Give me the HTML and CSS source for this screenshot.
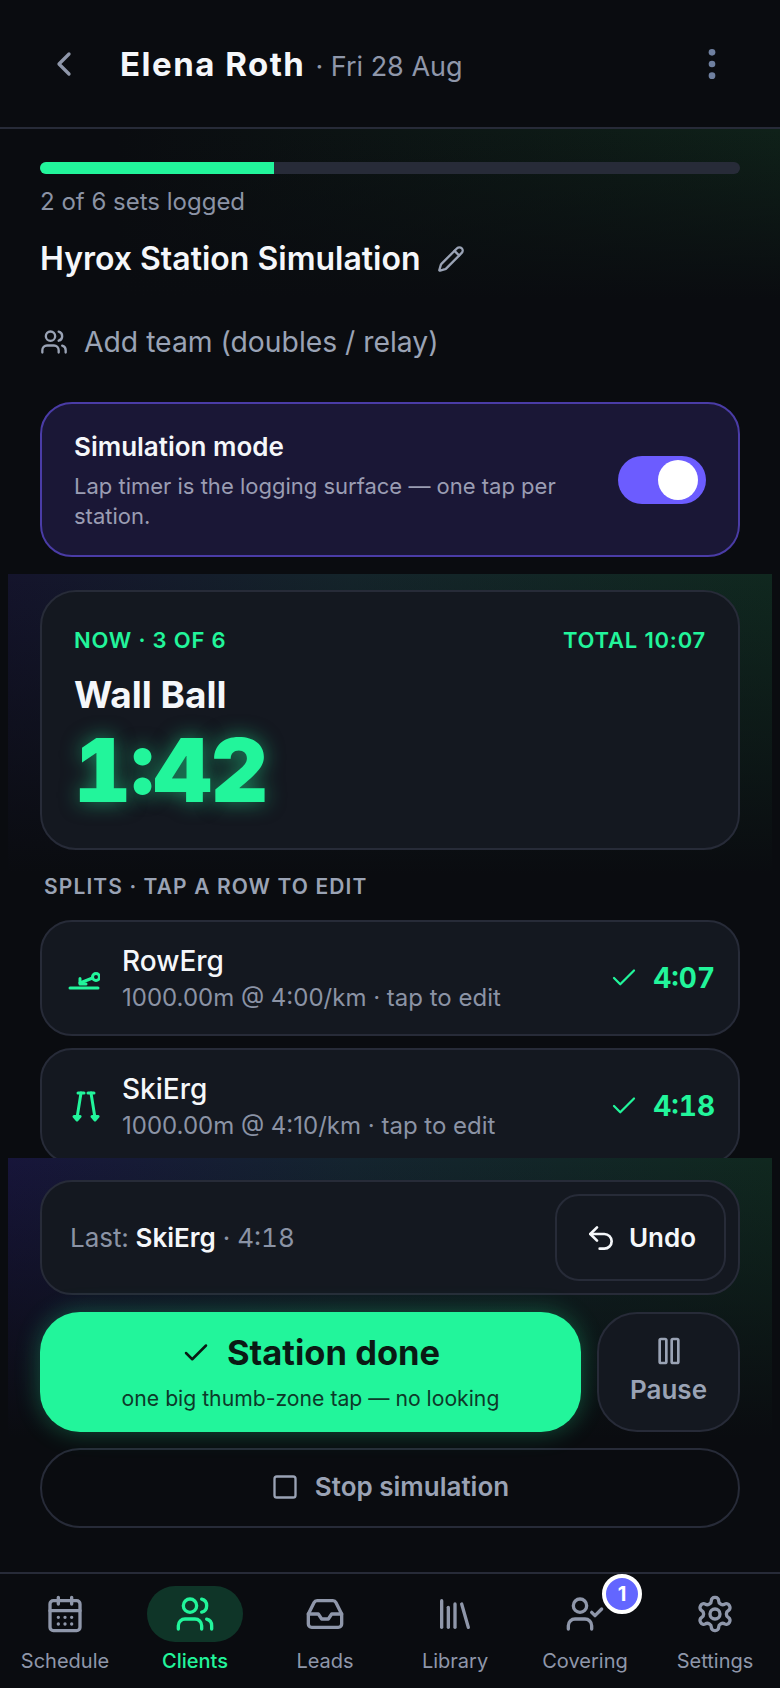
FILE: index.html
```html
<!DOCTYPE html>
<html lang="en">
<head>
    <meta charset="UTF-8">
    <meta name="viewport" content="width=device-width, initial-scale=1.0">
    <title>Elena Roth - Session</title>
    <link rel="stylesheet" href="styles.css">
</head>
<body>
    <header class="topbar">
        <svg class="back-icon" viewBox="0 0 24 24"><path d="m15 18-6-6 6-6"/></svg>
        <h1 class="client-name">Elena Roth</h1>
        <span class="client-date">· Fri 28 Aug</span>
        <svg class="more-icon" viewBox="0 0 24 24"><circle cx="12" cy="5" r="2"/><circle cx="12" cy="12" r="2"/><circle cx="12" cy="19" r="2"/></svg>
    </header>

    <div class="scroller">
        <section class="intro">
            <div class="progress"><div class="progress-fill"></div></div>
            <p class="progress-label">2 of 6 sets logged</p>
            <div class="session-title">
                <h2>Hyrox Station Simulation</h2>
                <svg class="icon pencil-icon" viewBox="0 0 24 24"><path d="M21.2 6.8a2.8 2.8 0 0 0-4-4L3.8 16.2a2 2 0 0 0-.5.8l-1.3 4.4a.5.5 0 0 0 .6.6l4.4-1.3a2 2 0 0 0 .8-.5z"/><path d="m15 5 4 4"/></svg>
            </div>
            <div class="add-team">
                <svg class="icon team-icon" viewBox="0 0 24 24"><path d="M16 21v-2a4 4 0 0 0-4-4H6a4 4 0 0 0-4 4v2"/><circle cx="9" cy="7" r="4"/><path d="M22 21v-2a4 4 0 0 0-3-3.87"/><path d="M16 3.13a4 4 0 0 1 0 7.75"/></svg>
                <span>Add team (doubles / relay)</span>
            </div>
            <div class="sim-card">
                <div class="sim-text">
                    <h3>Simulation mode</h3>
                    <p>Lap timer is the logging surface — one tap per station.</p>
                </div>
                <div class="toggle"><span class="toggle-knob"></span></div>
            </div>
        </section>

        <section class="timer-panel">
            <div class="timer-card">
                <div class="timer-head">
                    <span>NOW · 3 OF 6</span>
                    <span>TOTAL 10:07</span>
                </div>
                <div class="station-name">Wall Ball</div>
                <div class="timer-value">1:42</div>
            </div>
            <div class="splits-label">SPLITS · TAP A ROW TO EDIT</div>
            <div class="split-row">
                <svg class="split-icon" viewBox="0 0 32 32"><path d="M2 26h28"/><circle cx="28" cy="15" r="3.500"/><path d="M24.500 16 12 21"/><path d="M12 16.500V22h6"/></svg>
                <div class="split-info">
                    <div class="split-name">RowErg</div>
                    <div class="split-meta">1000.00m @ 4:00/km · tap to edit</div>
                </div>
                <svg class="icon split-check" viewBox="0 0 24 24"><path d="M20 6 9 17l-5-5"/></svg>
                <div class="split-time">4:07</div>
            </div>
            <div class="split-row">
                <svg class="split-icon" viewBox="0 0 32 32"><path d="M10 3h6M20 3h6"/><path d="M13 3 9 28M23 3l4 25"/><path d="M6 26.500 9 30l3-3.500zM24 26.500l3 3.500 3-3.500z"/></svg>
                <div class="split-info">
                    <div class="split-name">SkiErg</div>
                    <div class="split-meta">1000.00m @ 4:10/km · tap to edit</div>
                </div>
                <svg class="icon split-check" viewBox="0 0 24 24"><path d="M20 6 9 17l-5-5"/></svg>
                <div class="split-time">4:18</div>
            </div>
        </section>
    </div>

    <section class="dock">
        <div class="last-card">
            <div class="last-text">Last: <strong>SkiErg</strong> · 4:18</div>
            <button class="undo-btn">
                <svg class="icon" viewBox="0 0 24 24"><path d="M9 14 4 9l5-5"/><path d="M4 9h10.500a5.500 5.500 0 0 1 0 11H11"/></svg>
                Undo
            </button>
        </div>
        <div class="action-row">
            <button class="done-btn">
                <span class="done-title">
                    <svg class="icon" viewBox="0 0 24 24"><path d="M20 6 9 17l-5-5"/></svg>
                    Station done
                </span>
                <span class="done-sub">one big thumb-zone tap — no looking</span>
            </button>
            <button class="pause-btn">
                <svg class="icon" viewBox="0 0 24 24"><rect x="5" y="3" width="5" height="18" rx="1"/><rect x="14" y="3" width="5" height="18" rx="1"/></svg>
                Pause
            </button>
        </div>
        <button class="stop-btn">
            <svg class="icon" viewBox="0 0 24 24"><rect x="3" y="3" width="18" height="18" rx="2"/></svg>
            Stop simulation
        </button>
    </section>

    <nav class="tabbar">
        <div class="tab">
            <span class="tab-icon"><svg viewBox="0 0 24 24"><path d="M8 2v4M16 2v4"/><rect x="3" y="4" width="18" height="18" rx="2"/><path d="M3 10h18"/><path d="M8 14h.01M12 14h.01M16 14h.01M8 18h.01M12 18h.01M16 18h.01"/></svg></span>
            <span>Schedule</span>
        </div>
        <div class="tab active">
            <span class="tab-icon"><svg viewBox="0 0 24 24"><path d="M16 21v-2a4 4 0 0 0-4-4H6a4 4 0 0 0-4 4v2"/><circle cx="9" cy="7" r="4"/><path d="M22 21v-2a4 4 0 0 0-3-3.87"/><path d="M16 3.13a4 4 0 0 1 0 7.75"/></svg></span>
            <span>Clients</span>
        </div>
        <div class="tab">
            <span class="tab-icon"><svg viewBox="0 0 24 24"><path d="M22 12h-6l-2 3h-4l-2-3H2"/><path d="M5.450 5.110 2 12v6a2 2 0 0 0 2 2h16a2 2 0 0 0 2-2v-6l-3.450-6.890A2 2 0 0 0 16.760 4H7.240a2 2 0 0 0-1.790 1.110z"/></svg></span>
            <span>Leads</span>
        </div>
        <div class="tab">
            <span class="tab-icon"><svg viewBox="0 0 24 24"><path d="m16 6 4 14"/><path d="M12 6v14"/><path d="M8 8v12"/><path d="M4 4v16"/></svg></span>
            <span>Library</span>
        </div>
        <div class="tab">
            <span class="tab-icon">
                <svg viewBox="0 0 24 24"><path d="M16 21v-2a4 4 0 0 0-4-4H6a4 4 0 0 0-4 4v2"/><circle cx="9" cy="7" r="4"/><path d="m16 11 2 2 4-4"/></svg>
                <span class="badge">1</span>
            </span>
            <span>Covering</span>
        </div>
        <div class="tab">
            <span class="tab-icon"><svg viewBox="0 0 24 24"><path d="M12.220 2h-.44a2 2 0 0 0-2 2v.18a2 2 0 0 1-1 1.730l-.43.25a2 2 0 0 1-2 0l-.15-.08a2 2 0 0 0-2.730.73l-.22.380a2 2 0 0 0 .73 2.730l.15.1a2 2 0 0 1 1 1.720v.51a2 2 0 0 1-1 1.740l-.15.09a2 2 0 0 0-.73 2.730l.22.380a2 2 0 0 0 2.730.73l.15-.08a2 2 0 0 1 2 0l.43.25a2 2 0 0 1 1 1.730V20a2 2 0 0 0 2 2h.44a2 2 0 0 0 2-2v-.18a2 2 0 0 1 1-1.730l.43-.25a2 2 0 0 1 2 0l.15.08a2 2 0 0 0 2.730-.73l.22-.390a2 2 0 0 0-.73-2.730l-.15-.08a2 2 0 0 1-1-1.740v-.5a2 2 0 0 1 1-1.740l.15-.09a2 2 0 0 0 .73-2.730l-.22-.380a2 2 0 0 0-2.730-.73l-.15.08a2 2 0 0 1-2 0l-.43-.25a2 2 0 0 1-1-1.730V4a2 2 0 0 0-2-2z"/><circle cx="12" cy="12" r="3"/></svg></span>
            <span>Settings</span>
        </div>
    </nav>
</body>
</html>
```

FILE: styles.css
```css
* {
    margin: 0;
    padding: 0;
    box-sizing: border-box;
}

html, body {
    height: 100%;
}

body {
    background-color: #0a0c10;
    color: #f5f7fa;
    font-family: Inter, "Liberation Sans", sans-serif;
    display: flex;
    flex-direction: column;
    overflow: hidden;
}

button {
    font-family: inherit;
    background: none;
    border: none;
}

svg {
    fill: none;
    stroke: currentColor;
    stroke-width: 2;
    stroke-linecap: round;
    stroke-linejoin: round;
    flex: none;
    display: block;
}

/* top bar */
.topbar {
    height: 129px;
    border-bottom: 2px solid #272b38;
    display: flex;
    align-items: center;
    padding: 0 40px;
    flex: none;
}

.back-icon {
    width: 40px;
    height: 40px;
    color: #8f97aa;
    margin-left: 4px;
    margin-right: 36px;
}

.client-name {
    font-size: 33px;
    font-weight: 700;
    letter-spacing: 1.500px;
}

.client-date {
    font-size: 27px;
    color: #8f97aa;
    margin-left: 10px;
    margin-top: 6px;
}

.more-icon {
    width: 40px;
    height: 40px;
    margin-left: auto;
    margin-right: 8px;
    color: #6f80a0;
    fill: currentColor;
    stroke: none;
}

.scroller {
    height: 1029px;
    flex: none;
    overflow: hidden;
}

/* intro block */
.intro {
    padding: 33px 40px 0;
    height: 445px;
    background:
        linear-gradient(to bottom, rgba(10, 12, 16, 0) 0%, #0a0c10 170px),
        linear-gradient(90deg, #0a0c10 15%, #0f2119 100%);
}

.progress {
    height: 12px;
    border-radius: 6px;
    background-color: #272b38;
    overflow: hidden;
}

.progress-fill {
    width: 33.4%;
    height: 100%;
    background-color: #22f59b;
}

.progress-label {
    font-size: 24px;
    color: #8b93a5;
    margin-top: 14px;
    line-height: 28px;
}

.session-title {
    display: flex;
    align-items: center;
    gap: 16px;
    margin-top: 23px;
}

.session-title h2 {
    font-size: 32px;
    font-weight: 600;
    line-height: 40px;
}

.pencil-icon {
    width: 28px;
    height: 28px;
    color: #9aa3b5;
}

.add-team {
    display: flex;
    align-items: center;
    gap: 16px;
    margin-top: 44px;
    font-size: 28.300px;
    color: #9aa3b5;
    line-height: 38px;
}

.team-icon {
    width: 28px;
    height: 28px;
}

.sim-card {
    margin-top: 41px;
    height: 155px;
    border: 2px solid #4a3ca6;
    border-radius: 32px;
    background-color: #1a1736;
    padding: 0 32px;
    display: flex;
    align-items: center;
    justify-content: space-between;
}

.sim-text {
    width: 500px;
    padding-top: 2px;
}

.sim-text h3 {
    font-size: 26px;
    font-weight: 600;
    line-height: 32px;
}

.sim-text p {
    font-size: 22px;
    line-height: 30px;
    color: #9a9db3;
    margin-top: 8px;
}

.toggle {
    width: 88px;
    height: 48px;
    border-radius: 24px;
    background-color: #6c5cff;
    position: relative;
    flex: none;
}

.toggle-knob {
    position: absolute;
    top: 4px;
    right: 8px;
    width: 40px;
    height: 40px;
    border-radius: 50%;
    background-color: #fff;
}

/* timer panel */
.timer-panel {
    margin: 0 8px;
    padding: 16px 32px 0;
    height: 584px;
    background:
        linear-gradient(to bottom, rgba(10, 12, 16, 0) 0%, #0a0c10 300px),
        linear-gradient(90deg, #14142c 0%, #14242a 45%, #10281f 100%);
}

.timer-card {
    height: 260px;
    border: 2px solid #272b38;
    border-radius: 36px;
    background-color: #141820;
    padding: 34px 32px;
}

.timer-head {
    display: flex;
    justify-content: space-between;
    font-size: 22px;
    font-weight: 600;
    letter-spacing: 0.8px;
    color: #22f59b;
    line-height: 28px;
}

.station-name {
    font-size: 37px;
    font-weight: 700;
    line-height: 44px;
    margin-top: 19px;
}

.timer-value {
    font-size: 88px;
    font-weight: 900;
    font-variant-numeric: tabular-nums;
    line-height: 88px;
    color: #22f59b;
    text-shadow: 0 0 20px rgba(34, 245, 155, 0.5);
    margin-top: 9px;
}

.splits-label {
    font-size: 21px;
    font-weight: 600;
    letter-spacing: 1.100px;
    color: #9aa3b5;
    line-height: 28px;
    margin: 23px 4px 0;
}

.split-row {
    height: 116px;
    border: 2px solid #272b38;
    border-radius: 32px;
    background-color: #141820;
    display: flex;
    align-items: center;
    padding: 0 23px 0 26px;
    margin-top: 19px;
}

.split-row + .split-row {
    margin-top: 12px;
}

.split-icon {
    width: 32px;
    height: 32px;
    color: #22f59b;
    stroke-width: 3;
    margin-right: 22px;
}

.split-info {
    flex: 1;
}

.split-name {
    font-size: 28px;
    font-weight: 500;
    line-height: 36px;
}

.split-meta {
    font-size: 24px;
    color: #8b93a5;
    line-height: 32px;
    margin-top: 3px;
}

.split-check {
    width: 30px;
    height: 30px;
    stroke-width: 1.800;
    color: #22f59b;
    margin-right: 14px;
}

.split-time {
    font-size: 28px;
    font-weight: 700;
    font-variant-numeric: tabular-nums;
    color: #22f59b;
}

/* bottom dock */
.dock {
    margin: 0 8px;
    padding: 22px 32px 0;
    height: 414px;
    flex: none;
    background:
        linear-gradient(to bottom, rgba(10, 12, 16, 0) 0%, #0a0c10 280px),
        linear-gradient(90deg, #17153a 0%, #14242f 45%, #10281f 100%);
}

.last-card {
    height: 115px;
    border: 2px solid #272b38;
    border-radius: 32px;
    background-color: #141820;
    display: flex;
    align-items: center;
    justify-content: space-between;
    padding: 0 12px 0 28px;
}

.last-text {
    font-size: 26px;
    font-variant-numeric: tabular-nums;
    color: #8b93a5;
}

.last-text strong {
    color: #f5f7fa;
    font-weight: 600;
}

.undo-btn {
    width: 171px;
    height: 87px;
    border: 2px solid #272b38;
    border-radius: 24px;
    color: #f5f7fa;
    font-size: 26px;
    font-weight: 600;
    display: flex;
    align-items: center;
    justify-content: center;
    gap: 12px;
}

.undo-btn svg {
    width: 32px;
    height: 32px;
}

.action-row {
    display: flex;
    gap: 16px;
    margin-top: 17px;
}

.done-btn {
    flex: 1;
    height: 120px;
    border-radius: 40px;
    background-color: #22f59b;
    color: #0a1a14;
    box-shadow: 0 0 24px rgba(34, 245, 155, 0.3);
    display: flex;
    flex-direction: column;
    align-items: center;
    justify-content: center;
    gap: 10px;
}

.done-title {
    display: flex;
    align-items: center;
    gap: 16px;
    font-size: 34.500px;
    font-weight: 700;
    line-height: 42px;
    margin-top: -1px;
}

.done-title svg {
    width: 30px;
    height: 30px;
}

.done-sub {
    font-size: 21.200px;
    line-height: 28px;
    color: #0d3a2a;
}

.pause-btn {
    width: 143px;
    height: 120px;
    border: 2px solid #272b38;
    border-radius: 40px;
    background-color: #141820;
    color: #9aa3b5;
    font-size: 26px;
    font-weight: 600;
    display: flex;
    flex-direction: column;
    align-items: center;
    justify-content: center;
    gap: 7px;
    padding-bottom: 5px;
}

.pause-btn svg {
    width: 32px;
    height: 32px;
}

.stop-btn {
    width: 100%;
    height: 80px;
    margin-top: 16px;
    border: 2px solid #272b38;
    border-radius: 40px;
    color: #9aa3b5;
    font-size: 26px;
    font-weight: 600;
    display: flex;
    align-items: center;
    justify-content: center;
    gap: 16px;
    padding-bottom: 3px;
}

.stop-btn svg {
    width: 28px;
    height: 28px;
}

/* tab bar */
.tabbar {
    flex: none;
    height: 116px;
    border-top: 2px solid #272b38;
    display: grid;
    grid-template-columns: repeat(6, 1fr);
    padding-top: 12px;
}

.tab {
    display: flex;
    flex-direction: column;
    align-items: center;
    gap: 6px;
    font-size: 20px;
    line-height: 26px;
    color: #8f97aa;
}

.tab-icon {
    width: 96px;
    height: 56px;
    border-radius: 28px;
    display: flex;
    align-items: center;
    justify-content: center;
    position: relative;
}

.tab-icon svg {
    width: 40px;
    height: 40px;
}

.tab.active {
    color: #22f59b;
    font-weight: 500;
}

.tab.active .tab-icon {
    background-color: #0f3528;
}

.badge {
    position: absolute;
    top: -12px;
    right: -9px;
    width: 40px;
    height: 40px;
    border-radius: 50%;
    border: 4px solid #fff;
    background-color: #6366ff;
    color: #fff;
    font-size: 20px;
    font-weight: 700;
    display: flex;
    align-items: center;
    justify-content: center;
}
```
